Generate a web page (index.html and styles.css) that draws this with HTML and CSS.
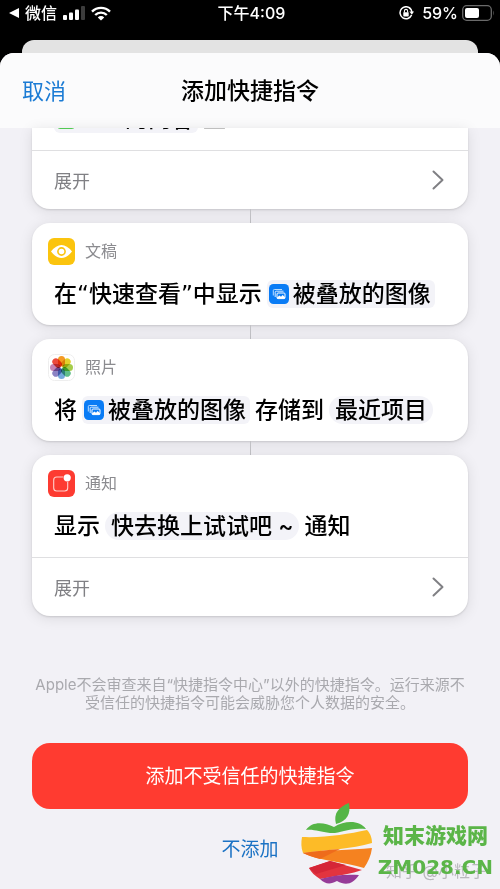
FILE: index.html
```html
<!DOCTYPE html>
<html lang="zh-CN">
<head>
    <meta charset="UTF-8">
    <meta name="viewport" content="width=device-width, initial-scale=1.0">
    <title>添加快捷指令</title>
    <link rel="stylesheet" href="styles.css">
</head>
<body>
    <!-- 公用图标 -->
    <svg class="defs" width="0" height="0" aria-hidden="true">
        <symbol id="chevron" viewBox="0 0 12 20">
            <path d="M1.5 1.5 L10.5 10 L1.5 18.5" fill="none" stroke="#808084" stroke-width="2" stroke-linecap="round" stroke-linejoin="round"/>
        </symbol>
        <symbol id="images" viewBox="0 0 20 20">
            <rect width="20" height="20" rx="4.5" fill="#0a7cf5"/>
            <path d="M4.3 11.5 V6.5 Q4.3 5.5 5.3 5.5 H13" fill="none" stroke="#b9dcff" stroke-width="1"/>
            <path d="M6.2 13 V8.2 Q6.2 7.2 7.2 7.2 H14.5" fill="none" stroke="#d8ebff" stroke-width="1"/>
            <rect x="8" y="9" width="8" height="5.6" rx="1" fill="#0a7cf5" stroke="#fff" stroke-width="1"/>
            <path d="M8 14.6 V13.4 L10.5 11.6 L12 12.8 L13.6 11 L16 13.3 V14.6 Z" fill="#fff"/>
        </symbol>
    </svg>

    <div class="status-bar">
        <div class="status-left">
            <svg width="10" height="10" viewBox="0 0 10 10"><path d="M0 5 L10 0 V10 Z" fill="#fff"/></svg>
            <span>微信</span>
            <svg width="22" height="14" viewBox="0 0 22 14">
                <rect x="0" y="9" width="4" height="5" rx="1" fill="#fff"/>
                <rect x="6" y="6.5" width="4" height="7.5" rx="1" fill="#fff"/>
                <rect x="12" y="3.5" width="4" height="10.5" rx="1" fill="#fff"/>
                <rect x="18" y="0" width="4" height="14" rx="1" fill="#3c3c3c"/>
            </svg>
            <svg width="20" height="15" viewBox="0 0 20 15">
                <g fill="none" stroke="#fff" stroke-width="2.4">
                    <path d="M1 5.6 A12.8 12.8 0 0 1 19 5.6"/>
                    <path d="M4.2 9 A8.2 8.2 0 0 1 15.8 9"/>
                </g>
                <path d="M10 14.5 L6.8 11.4 A4.6 4.6 0 0 1 13.2 11.4 Z" fill="#fff"/>
            </svg>
        </div>
        <div class="status-time">下午4:09</div>
        <div class="status-right">
            <svg width="15" height="14" viewBox="0 0 15 14">
                <path d="M11.7 2.9 A6 6 0 1 0 12.6 9" fill="none" stroke="#fff" stroke-width="1.5"/>
                <path d="M10.2 1.6 A6 6 0 0 1 13 6" fill="none" stroke="#fff" stroke-width="1.5"/>
                <path d="M10.4 5.6 H15 L12.8 8.8 Z" fill="#fff"/>
                <rect x="4.3" y="6.2" width="5.4" height="4.2" rx=".6" fill="#fff"/>
                <path d="M5.4 6.5 V5 A1.6 1.6 0 0 1 8.6 5 V6.5" fill="none" stroke="#fff" stroke-width="1.1"/>
            </svg>
            <span>59%</span>
            <svg width="32" height="16" viewBox="0 0 32 16">
                <rect x=".7" y=".7" width="28.6" height="14.6" rx="4" fill="none" stroke="#6a6a6a" stroke-width="1.3"/>
                <rect x="3" y="3" width="14" height="10" rx="2" fill="#fff"/>
                <path d="M31 5.5 Q32.3 8 31 10.5 Z" fill="#6a6a6a"/>
            </svg>
        </div>
    </div>

    <div class="back-sheet"></div>

    <main class="sheet">
        <header class="nav">
            <button class="cancel">取消</button>
            <h1>添加快捷指令</h1>
        </header>

        <div class="actions">
            <section class="card card-cut">
                <div class="cut-row">
                    <div class="sentence">
                        <span class="chip"><svg width="20" height="20" viewBox="0 0 20 20"><rect width="20" height="20" rx="4.5" fill="#53c954"/></svg>URL的内容</span>
                        <span>上</span>
                    </div>
                </div>
                <button class="expand">展开<svg width="12" height="20"><use href="#chevron"/></svg></button>
            </section>

            <div class="connector"></div>

            <section class="card">
                <div class="app">
                    <svg width="27" height="27" viewBox="0 0 27 27">
                        <rect width="27" height="27" rx="6" fill="#fbc40e"/>
                        <path d="M3 13.5 Q8 7 13.5 7 Q19 7 24 13.5 Q19 20 13.5 20 Q8 20 3 13.5 Z" fill="#fff"/>
                        <circle cx="13.5" cy="13.5" r="3.6" fill="#fff" stroke="#fbc40e" stroke-width="1.6"/>
                    </svg>
                    <span>文稿</span>
                </div>
                <div class="sentence">
                    <span class="quoted">在“快速查看”中显示</span>
                    <span class="chip"><svg width="20" height="20"><use href="#images"/></svg>被叠放的图像</span>
                </div>
            </section>

            <div class="connector"></div>

            <section class="card">
                <div class="app">
                    <svg width="27" height="27" viewBox="0 0 27 27">
                        <rect x=".5" y=".5" width="26" height="26" rx="6" fill="#fff" stroke="#eeeeee"/>
                        <g class="petals">
                            <rect x="10" y="2" width="7" height="10.5" rx="3.5" fill="#f59a23"/>
                            <rect x="10" y="2" width="7" height="10.5" rx="3.5" fill="#e3d02c" transform="rotate(45 13.5 13.5)"/>
                            <rect x="10" y="2" width="7" height="10.5" rx="3.5" fill="#a5cd4b" transform="rotate(90 13.5 13.5)"/>
                            <rect x="10" y="2" width="7" height="10.5" rx="3.5" fill="#5fbd8a" transform="rotate(135 13.5 13.5)"/>
                            <rect x="10" y="2" width="7" height="10.5" rx="3.5" fill="#74a9dc" transform="rotate(180 13.5 13.5)"/>
                            <rect x="10" y="2" width="7" height="10.5" rx="3.5" fill="#8b83c4" transform="rotate(225 13.5 13.5)"/>
                            <rect x="10" y="2" width="7" height="10.5" rx="3.5" fill="#c583b4" transform="rotate(270 13.5 13.5)"/>
                            <rect x="10" y="2" width="7" height="10.5" rx="3.5" fill="#ec4a3c" transform="rotate(315 13.5 13.5)"/>
                        </g>
                    </svg>
                    <span>照片</span>
                </div>
                <div class="sentence">
                    <span>将</span>
                    <span class="chip"><svg width="20" height="20"><use href="#images"/></svg>被叠放的图像</span>
                    <span>存储到</span>
                    <span class="chip chip-round">最近项目</span>
                </div>
            </section>

            <div class="connector"></div>

            <section class="card">
                <div class="app">
                    <svg width="27" height="27" viewBox="0 0 27 27">
                        <rect width="27" height="27" rx="6" fill="#fd3b31"/>
                        <rect x="5.7" y="7" width="14" height="14" rx="3" fill="none" stroke="#ffd0cc" stroke-width="1.1"/>
                        <circle cx="19.2" cy="7.8" r="4.3" fill="#fd3b31"/>
                        <circle cx="19.2" cy="7.8" r="3.6" fill="#fff"/>
                    </svg>
                    <span>通知</span>
                </div>
                <div class="sentence">
                    <span>显示</span>
                    <span class="chip chip-round">快去换上试试吧 ~</span>
                    <span>通知</span>
                </div>
                <button class="expand">展开<svg width="12" height="20"><use href="#chevron"/></svg></button>
            </section>
        </div>

        <footer class="footer">
            <p class="notice">Apple不会审查来自“快捷指令中心”以外的快捷指令。运行来源不受信任的快捷指令可能会威胁您个人数据的安全。</p>
            <button class="add">添加不受信任的快捷指令</button>
            <button class="skip">不添加</button>
        </footer>
    </main>

    <!-- 右下角水印 -->
    <div class="zhihu">知乎 @小粒子</div>
    <div class="watermark">
        <svg width="73" height="82" viewBox="0 0 73 82">
            <path d="M36 21 C33 10 39 4 49 0 C51 11 47 18 36 21 Z" fill="#55b546"/>
            <path d="M6 27 C12 18 24 19 34 24 C45 17 60 17 66 26 C48 24 40 31 30 30 C20 29 14 26 6 27 Z" fill="#55b546"/>
            <path d="M2 34 C25 35 48 31 67 27 C71 31 72 36 72 40 C52 46 25 47 3 50 C1 45 1 39 2 34 Z" fill="#fdbb27"/>
            <path d="M3 50 C25 47 50 47 72 45 C71 53 68 59 64 65 C45 59 20 58 3 50 Z" fill="#f58220"/>
            <path d="M3 50 C15 48 28 47 40 46 L20 56 C12 54 7 52 3 50 Z" fill="#ee6b1c"/>
            <path d="M9 65 L30 58 L62 67 C52 71 40 72 20 76 C15 73 11 69 9 65 Z" fill="#e2343f"/>
            <path d="M9 65 L30 58 L46 62 L16 71 Z" fill="#d52637"/>
            <path d="M20 76 C34 72 46 71 59 72 C53 81 46 83 37 78 C30 82 25 81 20 76 Z" fill="#963b98"/>
        </svg>
        <div class="watermark-text">
            <strong class="site-name">知末游戏网</strong>
            <strong class="site-url">ZM028.CN</strong>
        </div>
    </div>
</body>
</html>
```

FILE: styles.css
```css
* {
    box-sizing: border-box;
}

body {
    position: relative;
    display: flex;
    flex-direction: column;
    min-height: 100vh;
    margin: 0;
    background-color: #000;
    color: #000;
    font-family: Inter, "Noto Sans CJK SC", sans-serif;
}

button {
    border: none;
    padding: 0;
    background: none;
    font-family: inherit;
    cursor: pointer;
}

svg {
    display: block;
    flex-shrink: 0;
}

.defs {
    position: absolute;
}

/* 状态栏 */
.status-bar {
    display: grid;
    grid-template-columns: 1fr auto 1fr;
    align-items: center;
    height: 26px;
    margin-bottom: 14px;
    padding: 0 6px 0 9px;
    color: #fff;
    font-size: 16px;
    font-weight: 500;
    line-height: 26px;
}

.status-left,
.status-right {
    display: flex;
    align-items: center;
    gap: 6px;
}

.status-right {
    justify-content: flex-end;
    gap: 4px;
}

.status-right span {
    margin-left: 4px;
}

/* 弹出页 */
.back-sheet {
    height: 13px;
    margin: 0 22px;
    border-radius: 12px 12px 0 0;
    background-color: #e3e3e3;
}

.sheet {
    flex: 1;
    overflow: hidden;
    border-radius: 14px 14px 0 0;
    background-color: #f2f1f6;
}

.nav {
    display: grid;
    grid-template-columns: 1fr auto 1fr;
    align-items: center;
    height: 75px;
    padding: 0 22px 4px;
    background-color: #fbfbfc;
}

.nav h1 {
    margin: 0;
    font-size: 23px;
    font-weight: 500;
}

.cancel {
    justify-self: start;
    color: #1b7bd4;
    font-size: 22px;
}

/* 操作卡片 */
.actions {
    padding: 0 32px;
}

.card {
    border-radius: 18px;
    background-color: #fff;
    box-shadow: 0 1px 2px rgba(0, 0, 0, 0.12), 0 2px 14px rgba(0, 0, 0, 0.1);
}

.card-cut {
    border-radius: 0 0 18px 18px;
}

.cut-row {
    display: flex;
    align-items: flex-end;
    height: 22px;
    overflow: hidden;
}

.connector {
    width: 1px;
    height: 14px;
    margin: 0 auto;
    background-color: #c2c2c6;
}

.app {
    display: flex;
    align-items: center;
    gap: 10px;
    padding: 15px 16px 0;
    color: #8b8b8f;
    font-size: 16px;
    line-height: 27px;
}

.petals rect {
    mix-blend-mode: multiply;
}

.sentence {
    display: flex;
    align-items: center;
    gap: 5px;
    padding: 15px 22px 17px;
    font-size: 23px;
    font-weight: 500;
    line-height: 28px;
    white-space: nowrap;
}

.quoted {
    font-family: "DejaVu Sans", "Noto Sans CJK SC", sans-serif;
}

.chip {
    display: flex;
    align-items: center;
    gap: 4px;
    padding: 0 4px 0 2px;
    border-radius: 6px;
    background-color: #f3f3f8;
}

.chip-round {
    padding: 0 6px;
    border-radius: 14px;
}

.expand {
    display: flex;
    align-items: center;
    justify-content: space-between;
    width: 100%;
    height: 59px;
    padding: 0 24px 0 22px;
    border-top: 1px solid #dfdfe1;
    color: #808084;
    font-size: 18px;
}

/* 底部 */
.footer {
    padding: 60px 32px 20px;
    text-align: center;
}

.notice {
    margin: 0 0 31px;
    color: #a9a9ae;
    font-size: 15px;
    line-height: 18px;
}

.add,
.skip {
    display: block;
    width: 100%;
    font-size: 19px;
}

.add {
    height: 66px;
    padding-bottom: 4px;
    border-radius: 18px;
    background-color: #ff3b30;
    color: #fff;
}

.skip {
    width: auto;
    margin: 27px auto 0;
    color: #1b72c4;
    line-height: 28px;
}

/* 水印 */
.watermark {
    position: absolute;
    right: 7px;
    bottom: 4px;
    display: flex;
    align-items: flex-end;
    gap: 5px;
}

.watermark-text {
    display: flex;
    flex-direction: column;
    align-items: center;
    padding-bottom: 2px;
    color: #5bb548;
}

.site-name {
    font-size: 21px;
    font-weight: 900;
    line-height: 30px;
}

.site-url {
    font-family: "DejaVu Sans", sans-serif;
    font-size: 20px;
    line-height: 32px;
}

.zhihu {
    position: absolute;
    right: 14px;
    bottom: 6px;
    color: #b9b9bd;
    font-size: 16px;
    line-height: 24px;
}
```
